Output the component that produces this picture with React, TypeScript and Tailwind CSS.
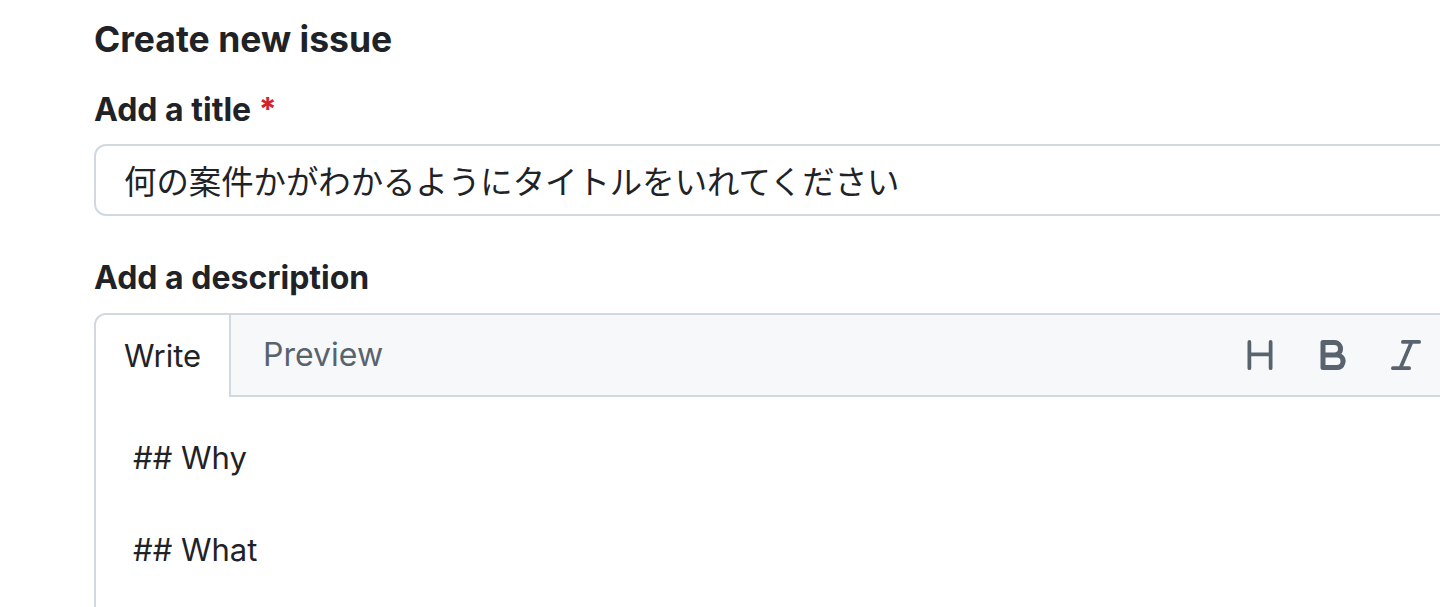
import React from "react";

const HeadingIcon = () => (
  <svg viewBox="0 0 16 16" className="w-[40px] h-[40px]" fill="currentColor">
    <path d="M3.75 2a.75.75 0 0 1 .75.75V7h7V2.75a.75.75 0 0 1 1.5 0v10.5a.75.75 0 0 1-1.5 0V8.5h-7v4.75a.75.75 0 0 1-1.5 0V2.75A.75.75 0 0 1 3.75 2Z" />
  </svg>
);

const BoldIcon = () => (
  <svg viewBox="0 0 16 16" className="w-[40px] h-[40px]" fill="currentColor">
    <path d="M4 2h4.5a3.501 3.501 0 0 1 2.852 5.53A3.499 3.499 0 0 1 9.5 14H4a1 1 0 0 1-1-1V3a1 1 0 0 1 1-1Zm1 7v3h4.5a1.5 1.5 0 0 0 0-3Zm3.5-2a1.5 1.5 0 0 0 0-3H5v3Z" />
  </svg>
);

const ItalicIcon = () => (
  <svg viewBox="0 0 16 16" className="w-[40px] h-[40px]" fill="currentColor">
    <path d="M6 2.75A.75.75 0 0 1 6.75 2h6.5a.75.75 0 0 1 0 1.5h-2.505l-3.858 9H9.25a.75.75 0 0 1 0 1.5h-6.5a.75.75 0 0 1 0-1.5h2.505l3.858-9H6.75A.75.75 0 0 1 6 2.75Z" />
  </svg>
);

const App: React.FC = () => {
  return (
    <div
      className="h-[607px] w-[1440px] overflow-hidden bg-white text-[#1f2328] pl-[94px] pt-[16px]"
      style={{ fontFamily: "Inter, 'Noto Sans CJK JP', sans-serif" }}
    >
      <h1 className="text-[35.5px] leading-[48px] font-bold">Create new issue</h1>

      <div className="mt-[26px] text-[32px] leading-[40px] font-bold">
        Add a title <span className="text-[#d1242f]">*</span>
      </div>

      <div className="mt-[14px] h-[72px] w-[1400px] rounded-xl border-2 border-[#d1d9e0] flex items-center pl-[28px]">
        <span className="text-[32.4px] text-[#1f2328]" style={{ fontFamily: "'Noto Sans CJK JP', sans-serif" }}>
          何の案件かがわかるようにタイトルをいれてください
        </span>
      </div>

      <div className="mt-[42px] text-[32px] leading-[40px] font-bold">Add a description</div>

      {/* Editor */}
      <div className="mt-[15px] w-[1400px] h-[400px] rounded-xl border-2 border-[#d1d9e0] overflow-hidden">
        <div className="flex h-[82px] bg-[#f6f8fa]">
          <div className="bg-white border-r-2 border-[#d1d9e0] rounded-tl-xl px-[28px] flex items-center text-[31px]">
            Write
          </div>
          <div className="flex-1 flex items-center border-b-2 border-[#d1d9e0]">
            <span className="pl-[32px] text-[32px] text-[#59636e]">Preview</span>
            <div className="ml-auto flex items-center gap-[33px] text-[#59636e]">
              <HeadingIcon />
              <BoldIcon />
              <ItalicIcon />
              <span className="w-[33px]" />
            </div>
          </div>
        </div>
        <div className="pl-[37px] pt-[38px] text-[31px] leading-[46px]">
          <div>## Why</div>
          <div>&nbsp;</div>
          <div>## What</div>
        </div>
      </div>
    </div>
  );
};

export default App;
